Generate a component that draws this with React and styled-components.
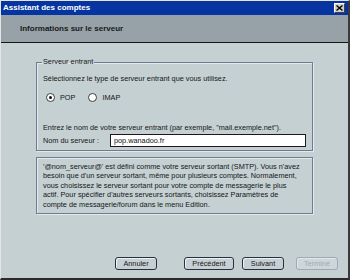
import React, { useState } from 'react';
import styled, { createGlobalStyle } from 'styled-components';

const GlobalStyle = createGlobalStyle`
  html, body {
    margin: 0;
    padding: 0;
    background: #c4d0d2;
  }
  * {
    box-sizing: border-box;
  }
`;

const Window = styled.div`
  width: 350px;
  height: 280px;
  display: flex;
  flex-direction: column;
  border-top: 1px solid #e4e4e4;
  border-left: 1px solid #e4e4e4;
  border-right: 2px solid #3a3a3a;
  border-bottom: 2px solid #2a2a2a;
  font-family: "Liberation Sans", Arial, sans-serif;
  font-size: 7.3px;
  color: #161616;
  background: #c4d0d2;
`;

const TitleBar = styled.div`
  height: 14px;
  flex: none;
  display: flex;
  align-items: center;
  justify-content: space-between;
  padding: 0 3px 0 2px;
  background: #0634a0;
`;

const Title = styled.span`
  color: #ffffff;
  font-weight: bold;
  font-size: 8px;
  line-height: 14px;
`;

const CloseButton = styled.button`
  width: 11px;
  height: 10px;
  padding: 0;
  margin: 0;
  display: flex;
  align-items: center;
  justify-content: center;
  background: #d4d0c8;
  border: 1px solid;
  border-color: #ffffff #404040 #404040 #ffffff;
`;

const Header = styled.div`
  height: 28px;
  flex: none;
  display: flex;
  align-items: center;
  padding-left: 19px;
  background: #96a1a8;
  border-bottom: 1px solid #151515;
  font-weight: bold;
  font-size: 8px;
  color: #1a1a1a;
`;

const Content = styled.div`
  flex: 1;
  display: flex;
  flex-direction: column;
  background: #c4d0d2;
`;

const Group = styled.fieldset`
  margin: 14px 35px 0 35px;
  padding: 7px 6px 3px 6px;
  border: 1px solid #6f7b92;
  box-shadow: 1px 1px 0 #e4eaec, inset 1px 1px 0 #e4eaec;
  min-width: 0;
`;

const Legend = styled.legend`
  padding: 0 1px;
  margin-left: -1px;
  line-height: 10px;
`;

const Line = styled.div`
  line-height: 10px;
  margin-top: ${(p) => p.$gap || 0}px;
  white-space: nowrap;
`;

const RadioRow = styled.div`
  display: flex;
  align-items: center;
  height: 10px;
  margin-top: 8px;
  padding-left: 3px;
  gap: 13px;
`;

const RadioLabel = styled.label`
  display: flex;
  align-items: center;
  gap: 5px;
  cursor: default;
`;

const RadioDot = styled.span`
  width: 9px;
  height: 9px;
  border-radius: 50%;
  background: #ffffff;
  border: 1px solid #3c3c3c;
  display: flex;
  align-items: center;
  justify-content: center;
  &::after {
    content: '';
    width: 3px;
    height: 3px;
    border-radius: 50%;
    background: ${(p) => (p.$checked ? '#111' : 'transparent')};
  }
`;

const ServerRow = styled.div`
  display: flex;
  align-items: center;
  margin-top: 1px;
`;

const FieldLabel = styled.span`
  width: 67px;
  flex: none;
`;

const Input = styled.input`
  width: 196px;
  height: 13px;
  padding: 0 3px;
  border: 1px solid #1a1a1a;
  background: #ffffff;
  font-family: "Liberation Sans", Arial, sans-serif;
  font-size: 7.3px;
  color: #111;
  outline: none;
`;

const InfoBox = styled.div`
  margin: 6px 35px 0 35px;
  padding: 4px 6px 4px 6px;
  border: 1px solid #6f7b92;
  box-shadow: 1px 1px 0 #e4eaec, inset 1px 1px 0 #e4eaec;
  line-height: 9.4px;
  white-space: nowrap;
`;

const Footer = styled.div`
  margin-top: auto;
  display: flex;
  justify-content: flex-end;
  padding: 0 10px 8px 0;
`;

const Button = styled.button`
  width: ${(p) => p.$w || 42}px;
  height: 13px;
  margin-left: ${(p) => p.$gap || 0}px;
  padding: 0;
  border-radius: 3px;
  border: 1px solid ${(p) => (p.disabled ? '#9ea8b6' : '#283040')};
  background: ${(p) => (p.disabled ? '#cdd7d9' : '#c6d0d4')};
  box-shadow: inset 1px 1px 0 ${(p) => (p.disabled ? '#e2e8ea' : '#eef2f3')};
  color: ${(p) => (p.disabled ? '#a0aab2' : '#161616')};
  font-family: "Liberation Sans", Arial, sans-serif;
  font-size: 7.3px;
  line-height: 11px;
`;

function CloseIcon() {
  return (
    <svg width="7" height="6" viewBox="0 0 7 6">
      <path d="M0.5 0.5 L6.5 5.5 M6.5 0.5 L0.5 5.5" stroke="#000" strokeWidth="1.4" />
    </svg>
  );
}

export default function App() {
  const [type, setType] = useState('pop');
  const [server, setServer] = useState('pop.wanadoo.fr');

  return (
    <>
      <GlobalStyle />
      <Window>
        <TitleBar>
          <Title>Assistant des comptes</Title>
          <CloseButton aria-label="Fermer">
            <CloseIcon />
          </CloseButton>
        </TitleBar>
        <Header>Informations sur le serveur</Header>
        <Content>
          <Group>
            <Legend>Serveur entrant</Legend>
            <Line>Sélectionnez le type de serveur entrant que vous utilisez.</Line>
            <RadioRow>
              <RadioLabel onClick={() => setType('pop')}>
                <RadioDot $checked={type === 'pop'} />
                POP
              </RadioLabel>
              <RadioLabel onClick={() => setType('imap')}>
                <RadioDot $checked={type === 'imap'} />
                IMAP
              </RadioLabel>
            </RadioRow>
            <Line $gap={21}>
              Entrez le nom de votre serveur entrant (par exemple, "mail.exemple.net").
            </Line>
            <ServerRow>
              <FieldLabel>Nom du serveur :</FieldLabel>
              <Input value={server} onChange={(e) => setServer(e.target.value)} />
            </ServerRow>
          </Group>
          <InfoBox>
            '@nom_serveur@' est défini comme votre serveur sortant (SMTP). Vous n'avez
            <br />
            besoin que d'un serveur sortant, même pour plusieurs comptes. Normalement,
            <br />
            vous choisissez le serveur sortant pour votre compte de messagerie le plus
            <br />
            actif. Pour spécifier d'autres serveurs sortants, choisissez Paramètres de
            <br />
            compte de messagerie/forum dans le menu Edition.
          </InfoBox>
          <Footer>
            <Button>Annuler</Button>
            <Button $w={50} $gap={27}>Précédent</Button>
            <Button $gap={8}>Suivant</Button>
            <Button $gap={12} disabled>Terminé</Button>
          </Footer>
        </Content>
      </Window>
    </>
  );
}
